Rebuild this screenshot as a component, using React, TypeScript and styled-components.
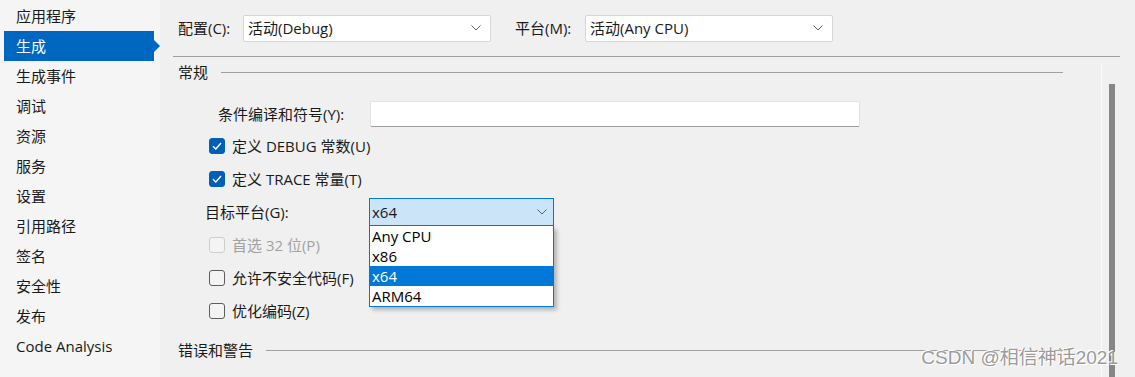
import React from 'react'
import styled, { createGlobalStyle } from 'styled-components'

const GlobalStyle = createGlobalStyle`
  body {
    margin: 0;
    font-family: "Open Sans", "Noto Sans CJK SC", sans-serif;
    font-size: 15px;
    color: #1a1a1a;
  }
`

const NAV_ITEMS = ['应用程序', '生成', '生成事件', '调试', '资源', '服务', '设置', '引用路径', '签名', '安全性', '发布', 'Code Analysis']
const PLATFORMS = ['Any CPU', 'x86', 'x64', 'ARM64']

const Chevron = () => (
  <svg width="10" height="6" viewBox="0 0 10 6">
    <path d="M0.5 0.5 L5 5 L9.5 0.5" fill="none" stroke="#5f5f5f" strokeWidth="1" />
  </svg>
)

const Check = () => (
  <svg width="10" height="8" viewBox="0 0 10 8">
    <path d="M1 4.2 L3.8 7 L9 1" fill="none" stroke="#fff" strokeWidth="1.4" />
  </svg>
)

const App = () => {
  return (
    <Page>
      <GlobalStyle />

      {/* 左侧导航 */}
      <Sidebar>
        {NAV_ITEMS.map(item => (
          <NavItem key={item} $active={item === '生成'}>{item}</NavItem>
        ))}
      </Sidebar>

      <Main>
        <TopBar>
          <FieldLabel $width={65}>配置(C):</FieldLabel>
          <Select $width={248}>
            <span>活动(Debug)</span>
            <Chevron />
          </Select>
          <FieldLabel $width={70} style={{ marginLeft: 24 }}>平台(M):</FieldLabel>
          <Select $width={248}>
            <span>活动(Any CPU)</span>
            <Chevron />
          </Select>
        </TopBar>
        <Divider />

        <Body>
          <Content>
            <SectionHeader>
              <span>常规</span>
              <SectionLine />
            </SectionHeader>

            <InputRow>
              <RowLabel $indent={58} $width={152}>条件编译和符号(Y):</RowLabel>
              <TextBox />
            </InputRow>

            <CheckRow>
              <CheckBox $checked><Check /></CheckBox>
              <span>定义 DEBUG 常数(U)</span>
            </CheckRow>
            <CheckRow>
              <CheckBox $checked><Check /></CheckBox>
              <span>定义 TRACE 常量(T)</span>
            </CheckRow>

            <FormRow>
              <RowLabel $indent={45} $width={164}>目标平台(G):</RowLabel>
              <ComboWrap>
                <Combo>
                  <span>x64</span>
                  <Chevron />
                </Combo>
                <DropList>
                  {PLATFORMS.map(p => (
                    <DropItem key={p} $selected={p === 'x64'}>{p}</DropItem>
                  ))}
                </DropList>
              </ComboWrap>
            </FormRow>

            <CheckRow $disabled>
              <CheckBox $disabled />
              <span>首选 32 位(P)</span>
            </CheckRow>
            <CheckRow>
              <CheckBox />
              <span>允许不安全代码(F)</span>
            </CheckRow>
            <CheckRow>
              <CheckBox />
              <span>优化编码(Z)</span>
            </CheckRow>

            <SectionHeader style={{ marginTop: 8 }}>
              <span>错误和警告</span>
              <SectionLine />
            </SectionHeader>
          </Content>

          <ScrollTrack>
            <ScrollThumb />
          </ScrollTrack>
        </Body>

        <Watermark>CSDN @相信神话2021</Watermark>
      </Main>
    </Page>
  )
}

export default App

const Page = styled.div`
  display: flex;
  width: 1135px;
  height: 377px;
  overflow: hidden;
  line-height: 20px;
`

const Sidebar = styled.nav`
  width: 160px;
  flex-shrink: 0;
  background: #f5f5f5;
  padding-top: 1px;
`

const NavItem = styled.div<{ $active?: boolean }>`
  position: relative;
  height: 30px;
  display: flex;
  align-items: center;
  width: ${p => (p.$active ? '138px' : '144px')};
  margin-left: ${p => (p.$active ? '4px' : '0')};
  padding-left: ${p => (p.$active ? '12px' : '16px')};
  background: ${p => (p.$active ? '#0067c0' : 'transparent')};
  color: ${p => (p.$active ? '#fff' : '#1a1a1a')};

  ${p => p.$active && `
    &::after {
      content: '';
      position: absolute;
      right: -6px;
      top: 9px;
      border-left: 6px solid #0067c0;
      border-top: 6px solid transparent;
      border-bottom: 6px solid transparent;
    }
  `}
`

const Main = styled.div`
  position: relative;
  flex: 1;
  display: flex;
  flex-direction: column;
  background: #f0f0f0;
`

const TopBar = styled.div`
  height: 56px;
  display: flex;
  align-items: center;
  padding-left: 18px;
`

const FieldLabel = styled.span<{ $width: number }>`
  width: ${p => p.$width}px;
  flex-shrink: 0;
`

const Select = styled.div<{ $width: number }>`
  width: ${p => p.$width}px;
  height: 27px;
  box-sizing: border-box;
  display: flex;
  align-items: center;
  justify-content: space-between;
  padding: 0 9px 0 4px;
  background: #fff;
  border: 1px solid #d6d6d6;
  border-radius: 2px;
`

const Divider = styled.div`
  height: 1px;
  background: #a0a0a0;
  margin: 0 15px 0 13px;
`

const Body = styled.div`
  flex: 1;
  display: flex;
`

const Content = styled.div`
  flex: 1;
  display: flex;
  flex-direction: column;
`

const SectionHeader = styled.div`
  height: 30px;
  display: flex;
  align-items: center;
  padding-left: 18px;
  margin-right: 38px;
  flex-shrink: 0;
`

const SectionLine = styled.div`
  flex: 1;
  height: 1px;
  background: #a0a0a0;
  margin-left: 13px;
`

const InputRow = styled.div`
  height: 26px;
  display: flex;
  align-items: center;
  margin: 14px 0 2px;
  flex-shrink: 0;
`

const RowLabel = styled.span<{ $indent: number; $width: number }>`
  padding-left: ${p => p.$indent}px;
  width: ${p => p.$width}px;
  flex-shrink: 0;
`

const TextBox = styled.div`
  width: 490px;
  height: 26px;
  box-sizing: border-box;
  background: #fff;
  border: 1px solid #e2e2e2;
  border-bottom-color: #9c9c9c;
  border-radius: 2px;
`

const CheckRow = styled.div<{ $disabled?: boolean }>`
  height: 33px;
  display: flex;
  align-items: center;
  gap: 7px;
  padding-left: 49px;
  flex-shrink: 0;
  color: ${p => (p.$disabled ? '#a2a2a2' : '#1a1a1a')};
`

const CheckBox = styled.div<{ $checked?: boolean; $disabled?: boolean }>`
  width: 16px;
  height: 16px;
  box-sizing: border-box;
  border-radius: 3px;
  display: flex;
  align-items: center;
  justify-content: center;
  background: ${p => (p.$checked ? '#005fb8' : '#f4f4f4')};
  border: 1px solid ${p => (p.$checked ? '#005fb8' : p.$disabled ? '#cdcdcd' : '#5c5c5c')};
`

const FormRow = styled.div`
  height: 33px;
  display: flex;
  align-items: center;
  flex-shrink: 0;
`

const ComboWrap = styled.div`
  position: relative;
`

const Combo = styled.div`
  width: 185px;
  height: 28px;
  box-sizing: border-box;
  display: flex;
  align-items: center;
  justify-content: space-between;
  padding: 0 6px 0 2px;
  background: #cce4f7;
  border: 1px solid #0078d7;
`

const DropList = styled.div`
  position: absolute;
  top: 28px;
  left: 0;
  width: 185px;
  box-sizing: border-box;
  background: #fff;
  border: 1px solid #0078d7;
  border-top: none;
  box-shadow: 3px 3px 4px rgba(0, 0, 0, 0.25);
  z-index: 2;
`

const DropItem = styled.div<{ $selected?: boolean }>`
  height: 20px;
  display: flex;
  align-items: center;
  padding-left: 2px;
  background: ${p => (p.$selected ? '#0078d7' : 'transparent')};
  color: ${p => (p.$selected ? '#fff' : '#000')};
`

const ScrollTrack = styled.div`
  width: 34px;
  margin-top: 6px;
  border-left: 1px solid #fbfbfb;
  display: flex;
  padding-left: 7px;
  box-sizing: border-box;
`

const ScrollThumb = styled.div`
  width: 6px;
  margin-top: 21px;
  background: #868686;
`

const Watermark = styled.div`
  position: absolute;
  right: 17px;
  bottom: 9px;
  font-family: "Liberation Sans", "Noto Sans CJK SC", sans-serif;
  font-size: 19px;
  color: #9a9a9a;
  text-shadow: 1px 1px 0 #fff, -1px -1px 0 #fff;
`
